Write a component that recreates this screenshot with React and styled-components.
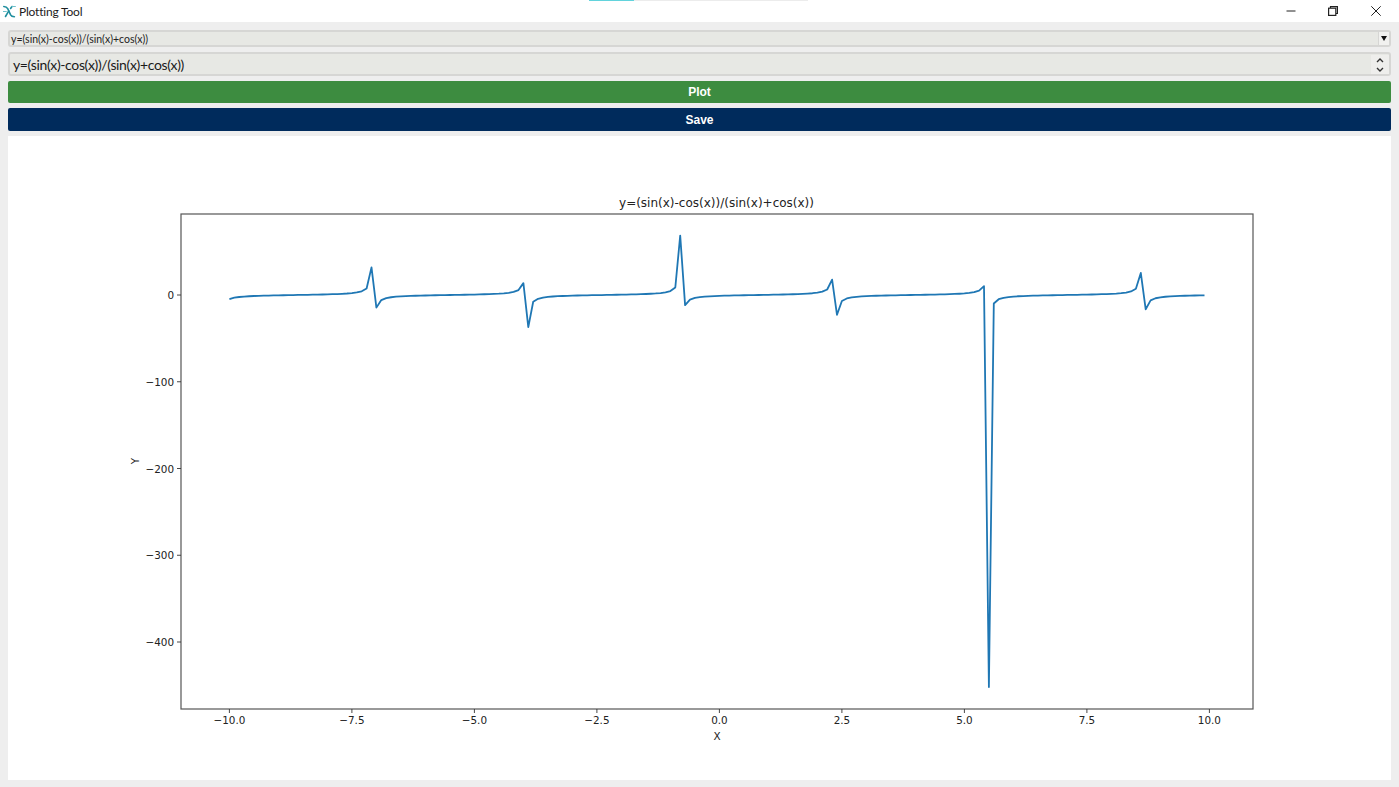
import React from "react";
import styled, { createGlobalStyle } from "styled-components";

const FORMULA = "y=(sin(x)-cos(x))/(sin(x)+cos(x))";

const GlobalStyle = createGlobalStyle`
  html, body {
    margin: 0;
    padding: 0;
    background: #eeeeee;
  }
  * {
    box-sizing: border-box;
  }
`;

const Window = styled.div`
  position: relative;
  width: 1399px;
  height: 787px;
  overflow: hidden;
  display: flex;
  flex-direction: column;
  background: #eeeeee;
  font-family: "Lato", "Open Sans", sans-serif;
`;

const TitleBar = styled.div`
  height: 22px;
  flex: none;
  display: flex;
  align-items: center;
  background: #ffffff;
  padding-left: 3px;
`;

const TitleText = styled.span`
  margin-left: 3px;
  font-size: 12px;
  letter-spacing: -0.2px;
  color: #1c1c1c;
`;

const WindowControls = styled.div`
  margin-left: auto;
  display: flex;
  height: 100%;
  padding-right: 2px;
`;

const ControlButton = styled.div`
  width: 42.5px;
  display: flex;
  align-items: center;
  justify-content: center;
  svg {
    display: block;
  }
`;

const LoadingStrip = styled.div`
  position: absolute;
  top: 0;
  left: 589px;
  width: 219px;
  height: 1px;
  background: #ececec;
  &::before {
    content: "";
    display: block;
    width: 45px;
    height: 100%;
    background: #62d3dc;
  }
`;

const Content = styled.div`
  flex: 1;
  min-height: 0;
  display: flex;
  flex-direction: column;
  padding: 8px 8px 7px;
  gap: 5px;
`;

const ComboBox = styled.div`
  height: 17px;
  flex: none;
  display: flex;
  align-items: center;
  justify-content: space-between;
  background: #e7e8e4;
  border: 2px solid #d6d6d4;
  border-radius: 3px;
  padding-left: 1px;
  font-size: 10.5px;
  color: #222222;
`;

const ComboArrow = styled.div`
  width: 11px;
  height: 100%;
  display: flex;
  align-items: center;
  justify-content: center;
  background: #f1f1ef;
  border-left: 1px solid #d6d6d4;
  &::after {
    content: "";
    border-left: 3.5px solid transparent;
    border-right: 3.5px solid transparent;
    border-top: 5px solid #111111;
  }
`;

const SpinBox = styled.div`
  height: 24px;
  flex: none;
  display: flex;
  align-items: center;
  justify-content: space-between;
  background: #e7e8e4;
  border: 2px solid #d6d6d4;
  border-radius: 3px;
  padding: 1px 0 0 3px;
  font-size: 14px;
  letter-spacing: -0.36px;
  color: #1a1a1a;
`;

const SpinArrows = styled.div`
  width: 18px;
  height: 100%;
  display: flex;
  align-items: center;
  justify-content: center;
  background: #eeeeec;
`;

const ActionButton = styled.button`
  height: ${(props) => props.$height}px;
  flex: none;
  border: none;
  border-radius: 2px;
  padding: 0;
  background: ${(props) => props.$color};
  color: #ffffff;
  font-family: "Liberation Sans", Arial, sans-serif;
  font-size: 12px;
  font-weight: 700;
`;

const ChartPanel = styled.div`
  flex: 1;
  min-height: 0;
  background: #ffffff;
  svg {
    display: block;
  }
`;

const TickLabel = styled.text`
  font-family: "DejaVu Sans", sans-serif;
  font-size: 10.4px;
  fill: #222222;
`;

const ChartTitle = styled.text`
  font-family: "DejaVu Sans", sans-serif;
  font-size: 12px;
  fill: #222222;
`;

const PLOT = { left: 181, right: 1253, top: 214, bottom: 709 };
const X_TICKS = ["-10.0", "-7.5", "-5.0", "-2.5", "0.0", "2.5", "5.0", "7.5", "10.0"];
const Y_TICKS = [0, -100, -200, -300, -400];

const toX = (x) => 719.4 + x * 49;
const toY = (y) => 295 + -y * 0.8675;
const minus = (s) => String(s).replace("-", "\u2212");

const buildCurve = () => {
  const points = [];
  for (let i = 0; i < 200; i++) {
    const x = -10 + i * 0.1;
    const y = (Math.sin(x) - Math.cos(x)) / (Math.sin(x) + Math.cos(x));
    points.push(`${toX(x).toFixed(2)},${toY(y).toFixed(2)}`);
  }
  return points.join(" ");
};

const Chart = () => (
  <svg width="1383" height="644" viewBox="8 136 1383 644">
    <ChartTitle x="716.5" y="207" textAnchor="middle">{FORMULA}</ChartTitle>
    <polyline points={buildCurve()} fill="none" stroke="#1f77b4" strokeWidth="1.8" strokeLinejoin="round" />
    <rect
      x={PLOT.left}
      y={PLOT.top}
      width={PLOT.right - PLOT.left}
      height={PLOT.bottom - PLOT.top}
      fill="none"
      stroke="#555555"
      strokeWidth="1.2"
    />
    {X_TICKS.map((t) => (
      <g key={t}>
        <line x1={toX(+t)} x2={toX(+t)} y1={PLOT.bottom} y2={PLOT.bottom + 4} stroke="#333333" strokeWidth="0.9" />
        <TickLabel x={toX(+t)} y="724" textAnchor="middle">{minus(t)}</TickLabel>
      </g>
    ))}
    {Y_TICKS.map((t) => (
      <g key={t}>
        <line x1={PLOT.left - 4} x2={PLOT.left} y1={toY(t)} y2={toY(t)} stroke="#333333" strokeWidth="0.9" />
        <TickLabel x="174" y={toY(t) + 4} textAnchor="end">{minus(t)}</TickLabel>
      </g>
    ))}
    <TickLabel x="717" y="740" textAnchor="middle">X</TickLabel>
    <TickLabel x="0" y="0" textAnchor="middle" transform="translate(138.5 461) rotate(-90)">Y</TickLabel>
  </svg>
);

const AppIcon = () => (
  <svg width="13" height="13" viewBox="0 0 13 13" fill="none" stroke="#1f8e9e" strokeWidth="1.6" strokeLinecap="round">
    <path d="M.8 1.5c2 0 3 .4 3.9 2.2l2.9 6.2c.7 1.4 1.5 1.8 3.8 1.8" />
    <path d="M2.5 11.5l3.3-5.6M7.6 3.5l1.4-2" />
    <path d="M.3 6.5h3M9 1.5h3.4" stroke="#6fc0ca" strokeWidth="1.1" />
  </svg>
);

const App = () => (
  <Window>
    <GlobalStyle />
    <LoadingStrip />
    <TitleBar>
      <AppIcon />
      <TitleText>Plotting Tool</TitleText>
      <WindowControls>
        <ControlButton>
          <svg width="10" height="10" viewBox="0 0 10 10">
            <path d="M.5 5h9" stroke="#222222" strokeWidth="1" />
          </svg>
        </ControlButton>
        <ControlButton>
          <svg width="10" height="10" viewBox="0 0 10 10" fill="none" stroke="#222222" strokeWidth="1.2">
            <rect x="0.6" y="2.2" width="7.2" height="7.2" />
            <path d="M2.5 2V.6h6.9v6.9H8" />
          </svg>
        </ControlButton>
        <ControlButton>
          <svg width="10" height="10" viewBox="0 0 10 10">
            <path d="M.3.3l9.4 9.4M9.7.3L.3 9.7" stroke="#222222" strokeWidth="1" />
          </svg>
        </ControlButton>
      </WindowControls>
    </TitleBar>
    <Content>
      <ComboBox>
        {FORMULA}
        <ComboArrow />
      </ComboBox>
      <SpinBox>
        {FORMULA}
        <SpinArrows>
          <svg width="8" height="18" viewBox="0 0 8 18" fill="none" stroke="#333333" strokeWidth="1.4">
            <path d="M1 6l3-3 3 3M1 12l3 3 3-3" />
          </svg>
        </SpinArrows>
      </SpinBox>
      <ActionButton $color="#3d8c40" $height={22}>Plot</ActionButton>
      <ActionButton $color="#002b5c" $height={23}>Save</ActionButton>
      <ChartPanel>
        <Chart />
      </ChartPanel>
    </Content>
  </Window>
);

export default App;
